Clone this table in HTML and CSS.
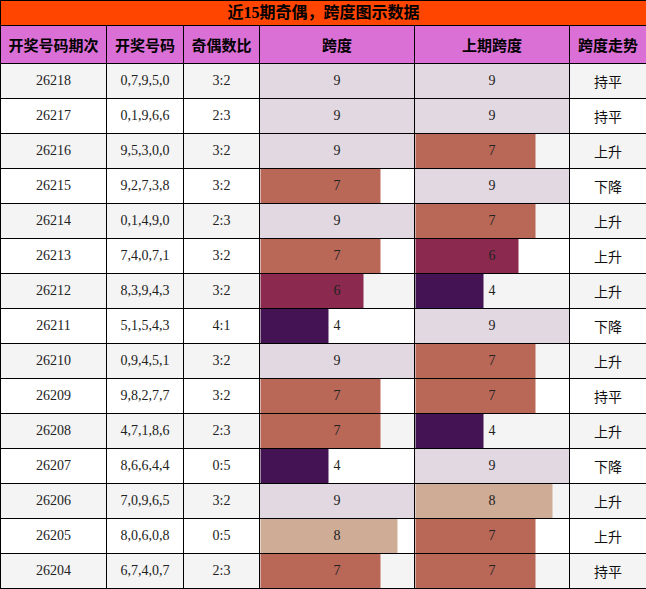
FILE: index.html
```html
<!DOCTYPE html>
<html lang="zh">
<head>
<meta charset="utf-8">
<title>近15期奇偶，跨度图示数据</title>
<link rel="stylesheet" href="styles.css">
</head>
<body>
<table class="grid">
  <colgroup>
    <col class="w-issue"><col class="w-nums"><col class="w-ratio"><col class="w-span"><col class="w-span"><col class="w-trend">
  </colgroup>
  <thead>
    <tr class="title"><th colspan="6">近15期奇偶，跨度图示数据</th></tr>
    <tr class="head"><th>开奖号码期次</th><th>开奖号码</th><th>奇偶数比</th><th>跨度</th><th>上期跨度</th><th>跨度走势</th></tr>
  </thead>
  <tbody>
    <tr><td>26218</td><td>0,7,9,5,0</td><td>3:2</td><td class="bar c9" style="--w:100%">9</td><td class="bar c9" style="--w:100%">9</td><td class="trend">持平</td></tr>
    <tr><td>26217</td><td>0,1,9,6,6</td><td>2:3</td><td class="bar c9" style="--w:100%">9</td><td class="bar c9" style="--w:100%">9</td><td class="trend">持平</td></tr>
    <tr><td>26216</td><td>9,5,3,0,0</td><td>3:2</td><td class="bar c9" style="--w:100%">9</td><td class="bar c7" style="--w:77.8%">7</td><td class="trend">上升</td></tr>
    <tr><td>26215</td><td>9,2,7,3,8</td><td>3:2</td><td class="bar c7" style="--w:77.8%">7</td><td class="bar c9" style="--w:100%">9</td><td class="trend">下降</td></tr>
    <tr><td>26214</td><td>0,1,4,9,0</td><td>2:3</td><td class="bar c9" style="--w:100%">9</td><td class="bar c7" style="--w:77.8%">7</td><td class="trend">上升</td></tr>
    <tr><td>26213</td><td>7,4,0,7,1</td><td>3:2</td><td class="bar c7" style="--w:77.8%">7</td><td class="bar c6" style="--w:66.7%">6</td><td class="trend">上升</td></tr>
    <tr><td>26212</td><td>8,3,9,4,3</td><td>3:2</td><td class="bar c6" style="--w:66.7%">6</td><td class="bar c4" style="--w:44.4%">4</td><td class="trend">上升</td></tr>
    <tr><td>26211</td><td>5,1,5,4,3</td><td>4:1</td><td class="bar c4" style="--w:44.4%">4</td><td class="bar c9" style="--w:100%">9</td><td class="trend">下降</td></tr>
    <tr><td>26210</td><td>0,9,4,5,1</td><td>3:2</td><td class="bar c9" style="--w:100%">9</td><td class="bar c7" style="--w:77.8%">7</td><td class="trend">上升</td></tr>
    <tr><td>26209</td><td>9,8,2,7,7</td><td>3:2</td><td class="bar c7" style="--w:77.8%">7</td><td class="bar c7" style="--w:77.8%">7</td><td class="trend">持平</td></tr>
    <tr><td>26208</td><td>4,7,1,8,6</td><td>2:3</td><td class="bar c7" style="--w:77.8%">7</td><td class="bar c4" style="--w:44.4%">4</td><td class="trend">上升</td></tr>
    <tr><td>26207</td><td>8,6,6,4,4</td><td>0:5</td><td class="bar c4" style="--w:44.4%">4</td><td class="bar c9" style="--w:100%">9</td><td class="trend">下降</td></tr>
    <tr><td>26206</td><td>7,0,9,6,5</td><td>3:2</td><td class="bar c9" style="--w:100%">9</td><td class="bar c8" style="--w:88.9%">8</td><td class="trend">上升</td></tr>
    <tr><td>26205</td><td>8,0,6,0,8</td><td>0:5</td><td class="bar c8" style="--w:88.9%">8</td><td class="bar c7" style="--w:77.8%">7</td><td class="trend">上升</td></tr>
    <tr><td>26204</td><td>6,7,4,0,7</td><td>2:3</td><td class="bar c7" style="--w:77.8%">7</td><td class="bar c7" style="--w:77.8%">7</td><td class="trend">持平</td></tr>
  </tbody>
</table>
</body>
</html>
```
FILE: styles.css
```css
html, body {
  margin: 0;
  padding: 0;
  background: #ffffff;
}

.grid {
  width: 646px;
  border-collapse: collapse;
  table-layout: fixed;
  font-family: "Liberation Serif", "Noto Sans CJK SC", serif;
  color: #222222;
}

.w-issue { width: 106px; }
.w-nums { width: 77px; }
.w-ratio { width: 76px; }
.w-span { width: 155px; }
.w-trend { width: 77px; }

.grid th,
.grid td {
  border: 1px solid #000000;
  padding: 0;
  text-align: center;
  vertical-align: middle;
}

.title th {
  height: 24px;
  background: #ff4500;
  color: #000000;
  font-family: "Liberation Serif", "Noto Sans CJK SC", serif;
  font-size: 16px;
  font-weight: bold;
  line-height: 24px;
}

.head th {
  height: 37px;
  background: #da70d6;
  color: #000000;
  font-family: "Noto Sans CJK SC", sans-serif;
  font-size: 15px;
  font-weight: bold;
  line-height: 20px;
}

.grid tbody tr:nth-child(odd) { background: #f4f4f4; }
.grid tbody tr:nth-child(even) { background: #ffffff; }

.grid tbody td {
  height: 34px;
  font-size: 14px;
  line-height: 18px;
}

.grid td.trend {
  font-family: "Noto Sans CJK SC", sans-serif;
  font-size: 14px;
  color: #111111;
}

.bar {
  background-image: linear-gradient(to right, var(--c) var(--w), transparent var(--w));
}

.c9 { --c: #e2d8e2; }
.c8 { --c: #cfac95; }
.c7 { --c: #b96858; }
.c6 { --c: #8b2a4e; }
.c4 { --c: #431353; }
```
